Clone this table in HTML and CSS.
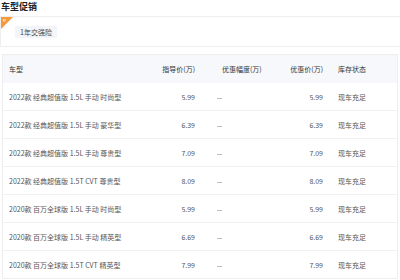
FILE: index.html
```html
<!DOCTYPE html>
<html>
<head>
<meta charset="utf-8">
<link rel="stylesheet" href="styles.css">
</head>
<body>
<div class="page">
  <div class="title">车型促销</div>
  <div class="promo">
    <span class="badge"><svg width="12" height="12" viewBox="0 0 12 12"><polygon points="0,0 12,0 0,12" fill="#f59a3c"/><rect x="2" y="2" width="0.8" height="2.5" fill="#fff"/><rect x="3.6" y="2" width="0.8" height="2.5" fill="#fff"/></svg></span>
    <span class="tag">1年交强险</span>
  </div>
  <div class="table">
    <div class="row head">
      <div class="c1">车型</div><div class="c2">指导价(万)</div><div class="c3">优惠幅度(万)</div><div class="c4">优惠价(万)</div><div class="c5">库存状态</div>
    </div>
    <div class="row"><div class="c1">2022款 经典超值版 1.5L 手动 时尚型</div><div class="c2">5.99</div><div class="c3">--</div><div class="c4">5.99</div><div class="c5">现车充足</div></div>
    <div class="row"><div class="c1">2022款 经典超值版 1.5L 手动 豪华型</div><div class="c2">6.39</div><div class="c3">--</div><div class="c4">6.39</div><div class="c5">现车充足</div></div>
    <div class="row"><div class="c1">2022款 经典超值版 1.5L 手动 尊贵型</div><div class="c2">7.09</div><div class="c3">--</div><div class="c4">7.09</div><div class="c5">现车充足</div></div>
    <div class="row"><div class="c1">2022款 经典超值版 1.5T CVT 尊贵型</div><div class="c2">8.09</div><div class="c3">--</div><div class="c4">8.09</div><div class="c5">现车充足</div></div>
    <div class="row"><div class="c1">2020款 百万全球版 1.5L 手动 时尚型</div><div class="c2">5.99</div><div class="c3">--</div><div class="c4">5.99</div><div class="c5">现车充足</div></div>
    <div class="row"><div class="c1">2020款 百万全球版 1.5L 手动 精英型</div><div class="c2">6.69</div><div class="c3">--</div><div class="c4">6.69</div><div class="c5">现车充足</div></div>
    <div class="row"><div class="c1">2020款 百万全球版 1.5T CVT 精英型</div><div class="c2">7.99</div><div class="c3">--</div><div class="c4">7.99</div><div class="c5">现车充足</div></div>
  </div>
</div>
</body>
</html>
```
FILE: styles.css
```css
html, body {
  margin: 0;
  padding: 0;
  background: #fff;
}
body {
  font-family: "Noto Sans CJK SC", "Noto Sans", sans-serif;
  color: #555;
  width: 400px;
  height: 280px;
  overflow: hidden;
}
.page {
  display: flex;
  flex-direction: column;
}
.title {
  font-size: 9px;
  font-weight: bold;
  color: #222;
  line-height: 12px;
  padding: 1px 0 0 1px;
  height: 16px;
  box-sizing: border-box;
}
.promo {
  position: relative;
  height: 31px;
  border: 1px solid #eeeeee;
  border-right: none;
  box-sizing: border-box;
  display: flex;
  align-items: center;
  padding-left: 14px;
}
.badge {
  position: absolute;
  left: 0;
  top: 0;
  width: 12px;
  height: 12px;
  line-height: 0;
}
.tag {
  background: #f4f5f8;
  font-size: 7px;
  line-height: 12px;
  padding: 0 5px;
  color: #444;
}
.table {
  margin: 7px 2px 0 2px;
  border: 1px solid #eeeeee;
  border-bottom: none;
}
.row {
  display: grid;
  grid-template-columns: 157px 43px 87px 41px 1fr;
  height: 28px;
  align-items: center;
  font-size: 7px;
  border-bottom: 1px solid #f0f0f0;
  box-sizing: border-box;
  white-space: nowrap;
}
.row.head {
  background: #f7f8fb;
  color: #333;
  border-bottom: none;
}
.c1 { padding-left: 6px; }
.c2 { text-align: right; padding-right: 8px; }
.c3 { padding-left: 14px; }
.head .c3 { padding-left: 19px; }
.c4 { text-align: right; padding-right: 8px; }
.c5 { padding-left: 7px; }
```
